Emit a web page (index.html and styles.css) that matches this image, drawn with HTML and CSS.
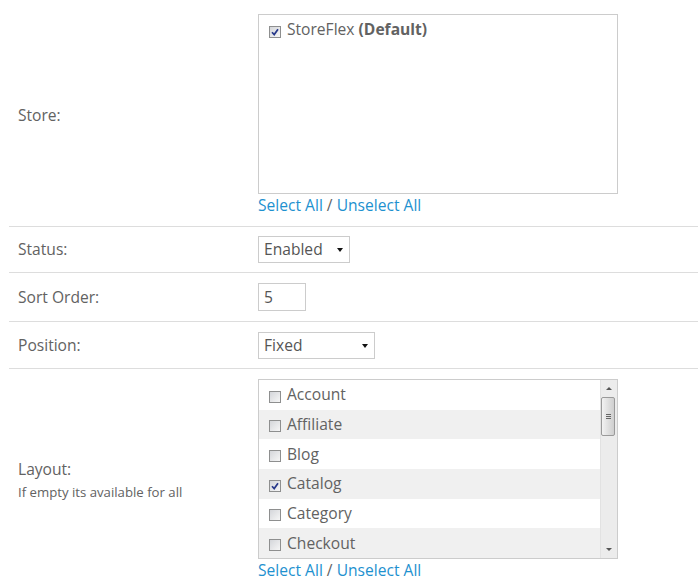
FILE: index.html
```html
<!DOCTYPE html>
<html>
<head>
<meta charset="utf-8">
<link rel="stylesheet" href="styles.css">
</head>
<body>
<div class="form">
  <div class="row row-store">
    <div class="label">Store:</div>
    <div class="value">
      <div class="well">
        <div class="items">
          <div class="item"><span class="cb checked"><svg viewBox="0 0 10 10"><path d="M2 5.2 L4.2 7.6 L8 2.2"/></svg></span><span>StoreFlex <b>(Default)</b></span></div>
        </div>
      </div>
      <div class="links"><a>Select All</a> / <a>Unselect All</a></div>
    </div>
  </div>
  <div class="row row-status">
    <div class="label">Status:</div>
    <div class="value">
      <div class="select sel-status"><span>Enabled</span><i class="caret"></i></div>
    </div>
  </div>
  <div class="row row-sort">
    <div class="label">Sort Order:</div>
    <div class="value">
      <div class="input">5</div>
    </div>
  </div>
  <div class="row row-pos">
    <div class="label">Position:</div>
    <div class="value">
      <div class="select sel-pos"><span>Fixed</span><i class="caret"></i></div>
    </div>
  </div>
  <div class="row row-layout">
    <div class="label">Layout:<div class="help">If empty its available for all</div></div>
    <div class="value">
      <div class="well">
        <div class="items">
          <div class="item"><span class="cb"></span><span>Account</span></div>
          <div class="item odd"><span class="cb"></span><span>Affiliate</span></div>
          <div class="item"><span class="cb"></span><span>Blog</span></div>
          <div class="item odd"><span class="cb checked"><svg viewBox="0 0 10 10"><path d="M2 5.2 L4.2 7.6 L8 2.2"/></svg></span><span>Catalog</span></div>
          <div class="item"><span class="cb"></span><span>Category</span></div>
          <div class="item odd"><span class="cb"></span><span>Checkout</span></div>
        </div>
        <div class="sb">
          <div class="sb-btn"><i class="up"></i></div>
          <div class="sb-track">
            <div class="thumb"><i></i><i></i><i></i></div>
          </div>
          <div class="sb-btn"><i class="down"></i></div>
        </div>
      </div>
      <div class="links"><a>Select All</a> / <a>Unselect All</a></div>
    </div>
  </div>
</div>
</body>
</html>
```
FILE: styles.css
```css
html, body {
  margin: 0;
  padding: 0;
  background: #fff;
  overflow: hidden;
}
body {
  font-family: "Open Sans", "DejaVu Sans", sans-serif;
  font-size: 15.6px;
  color: #626262;
  line-height: 20px;
}
.form {
  padding-left: 9px;
  width: 720px;
}
.row {
  display: flex;
  align-items: center;
  border-top: 1px solid #ddd;
}
.row-store {
  border-top: none;
  padding: 14px 0 11px;
}
.row-status { padding: 9px 0 9px; }
.row-sort { padding: 10px 0 10px; }
.row-pos { padding: 10px 0 9px; }
.row-layout { padding: 10px 0 10px; }
.label {
  width: 240px;
  padding-left: 9px;
  flex: none;
}
.row-status .label,
.row-sort .label,
.row-pos .label {
  margin-top: -1px;
}
.help {
  font-size: 13.2px;
  line-height: 18px;
  margin-top: 4px;
}
.value {
  flex: 1;
}
.well {
  width: 360px;
  height: 180px;
  box-sizing: border-box;
  border: 1px solid #ccc;
  display: flex;
  overflow: hidden;
  background: #fff;
}
.items {
  flex: 1;
  overflow: hidden;
}
.item {
  height: 29.67px;
  display: flex;
  align-items: center;
  padding-left: 10px;
  gap: 6px;
}
.item > span:last-child {
  margin-top: -1px;
}
.item.odd {
  background: #f0f0f0;
}
.item b {
  font-weight: 700;
  color: #626262;
}
.cb {
  flex: none;
  width: 12px;
  height: 12px;
  box-sizing: border-box;
  border: 1px solid #8e8f8f;
  background: linear-gradient(135deg, #d4d6da, #f6f6f6);
  margin-top: 4px;
  display: flex;
  align-items: center;
  justify-content: center;
}
.cb svg {
  width: 10px;
  height: 10px;
  fill: none;
  stroke: #27388a;
  stroke-width: 1.7;
}
.links {
  line-height: 20px;
  height: 20px;
  color: #626262;
  margin-top: 1px;
}
.links a {
  color: #1e91cf;
  text-decoration: none;
}
.select, .input {
  box-sizing: border-box;
  border: 1px solid #ccc;
  background: #fff;
  color: #555;
  display: flex;
  align-items: center;
  padding-left: 5px;
}
.select span, .input {
  line-height: 18px;
}
.sel-status {
  width: 92px;
  height: 27px;
}
.sel-pos {
  width: 117px;
  height: 27px;
}
.input {
  width: 48px;
  height: 28px;
}
.select span {
  flex: 1;
  margin-top: -1px;
}
.caret {
  width: 0;
  height: 0;
  border-left: 3.5px solid transparent;
  border-right: 3.5px solid transparent;
  border-top: 4px solid #111;
  margin-right: 6px;
  margin-top: 1px;
}
.sb {
  width: 16px;
  flex: none;
  background: #ececec;
  border-left: 1px solid #e2e2e2;
  display: flex;
  flex-direction: column;
}
.sb-btn {
  height: 17px;
  display: flex;
  align-items: center;
  justify-content: center;
}
.sb-btn i {
  width: 0;
  height: 0;
  border-left: 3.5px solid transparent;
  border-right: 3.5px solid transparent;
}
.sb-btn .up {
  border-bottom: 3px solid #555;
}
.sb-btn .down {
  border-top: 3px solid #555;
}
.sb-track {
  flex: 1;
}
.thumb {
  width: 14px;
  height: 39px;
  box-sizing: border-box;
  border: 1px solid #9a9a9a;
  border-radius: 2px;
  background: linear-gradient(90deg, #f2f2f2, #dcdcdc 60%, #cfcfcf);
  display: flex;
  flex-direction: column;
  align-items: center;
  justify-content: center;
  gap: 1px;
}
.thumb i {
  width: 5px;
  height: 1px;
  background: #666;
}
```
